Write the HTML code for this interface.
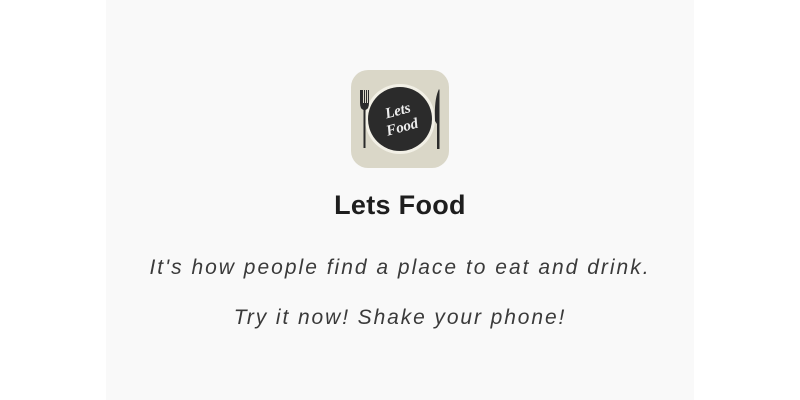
<html><head><style>
body{margin:0;width:800px;height:400px;background:#fff;font-family:"Liberation Sans",sans-serif;overflow:hidden}
.p{position:absolute;left:106px;top:0;width:588px;height:400px;background:#f9f9f9}
.t{position:absolute;width:800px;text-align:center;left:0}
</style></head><body>
<div class="p"></div>
<svg style="position:absolute;left:351px;top:70px" width="98" height="98" viewBox="0 0 98 98">
<rect width="98" height="98" rx="17" fill="#dad7c8"/>
<circle cx="49" cy="49" r="35" fill="#f2f0e6"/>
<circle cx="49" cy="49" r="32" fill="#2b2b2b"/>
<text x="49" y="45" font-family="Liberation Serif" font-style="italic" font-weight="bold" font-size="15" fill="#eee" text-anchor="middle" transform="rotate(-15 49 49)">Lets</text>
<text x="49" y="62" font-family="Liberation Serif" font-style="italic" font-weight="bold" font-size="15" fill="#eee" text-anchor="middle" transform="rotate(-15 49 49)">Food</text>
<path d="M9 20v13q0 6 3.5 7v38h2V40q3.5-1 3.5-7V20h-1v13h-1V20h-1v13h-1V20h-1v13h-1V20z" fill="#2b2b2b"/>
<path d="M88 19q-5 10-4 32l2 3v25h2.5V20z" fill="#2b2b2b"/>
</svg>
<div class="t" style="top:190px;font-size:27px;font-weight:bold;color:#1e1e1e;letter-spacing:0.3px">Lets Food</div>
<div class="t" style="top:256px;font-size:21px;font-style:italic;color:#3a3a3a;letter-spacing:2px">It's how people find a place to eat and drink.</div>
<div class="t" style="top:306px;font-size:21px;font-style:italic;color:#3a3a3a;letter-spacing:1.9px">Try it now! Shake your phone!</div>
</body></html>
